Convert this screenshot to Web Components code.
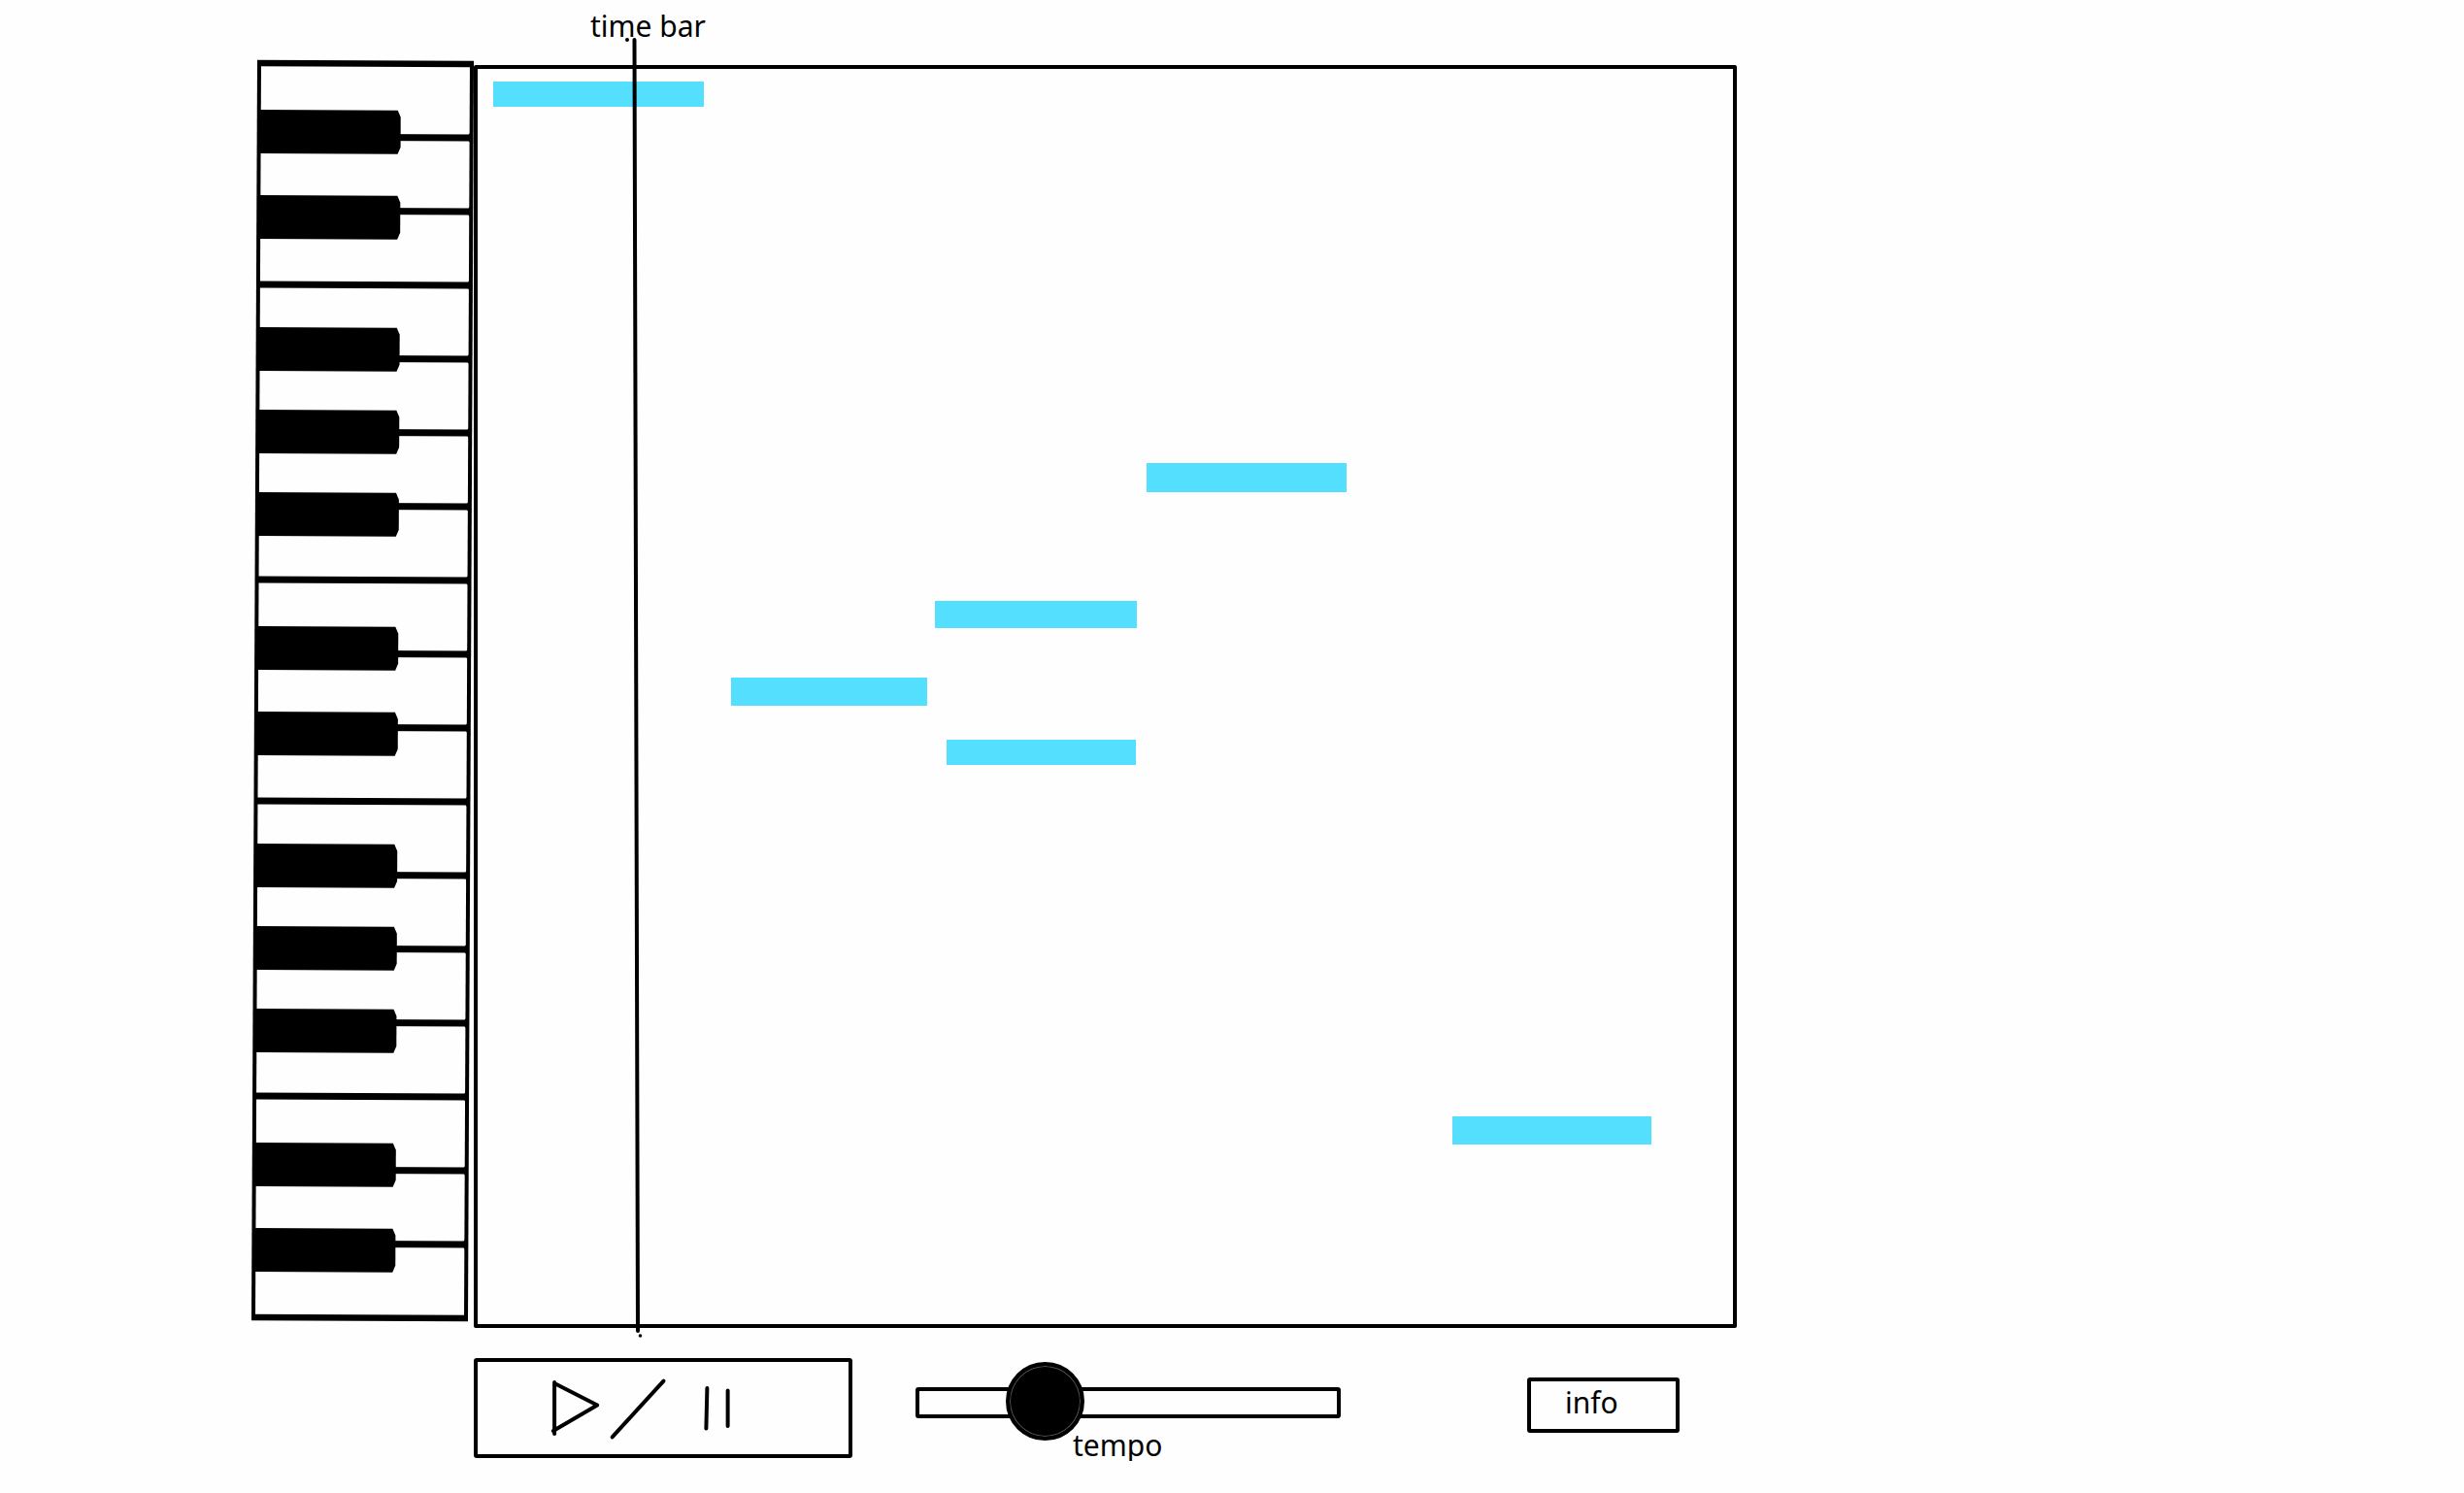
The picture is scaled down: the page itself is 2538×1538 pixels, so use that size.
<!DOCTYPE html>
<html lang="en">
<head>
<meta charset="utf-8">
<meta name="viewport" content="width=device-width, initial-scale=1">
<title>Piano roll</title>
<style>
  body { margin: 0; background: #fefefe; color: #000; font: 30px/32px "Noto Sans", "Open Sans", sans-serif; }
</style>
</head>
<body>
<piano-app></piano-app>

<script>
const define = (name, html, setup) => {
  const template = document.createElement("template");
  template.innerHTML = html;
  customElements.define(name, class extends HTMLElement {
    constructor() {
      super();
      this.attachShadow({ mode: "open" }).append(template.content.cloneNode(true));
    }
    connectedCallback() { if (setup) setup(this); }
  });
};

/* Vertical keyboard: 17 white keys, black keys grouped two and three per octave */
const whiteLines = Array.from({ length: 16 }, (_, i) =>
  `<path d="M2 ${3 + 76 * (i + 1)}H221" stroke-width="7"/>
   <path d="M221 ${3 + 76 * (i + 1) - 7}l-3 4v6l3 4z" stroke="none"/>`).join("");
const blackKeys = [51, 139, 275, 360, 445, 583, 671, 807, 892, 977, 1115, 1203].map(y =>
  `<path d="M1 ${y}H145l3 7v31l-3 7H1z" stroke="none"/>`).join("");

define("piano-keyboard", `
  <style>
    :host { display: block; }
    svg { display: block; width: 100%; height: 0; min-height: 100%; overflow: visible; }
  </style>
  <svg viewBox="258 67 230 1301" preserveAspectRatio="none" role="img" aria-label="Piano keyboard">
    <g transform="translate(265 62) rotate(0.265)" fill="#000" stroke="#000">
      <path d="M0 3H223" stroke-width="6.5"/>
      <path d="M0 1295H223" stroke-width="6.5"/>
      <path d="M2 0V1298" fill="none" stroke-width="4"/>
      <path d="M221 0V1298" fill="none" stroke-width="4"/>
      ${whiteLines}
      ${blackKeys}
    </g>
  </svg>`);

define("roll-note", `
  <style>
    :host { position: absolute; background: #55dfff; }
  </style>`, host => {
  const [start, pitch, length, size] = host.getAttribute("at").split(" ").map(n => n / 1293 * 100 + "%");
  Object.assign(host.style, { left: start, top: pitch, width: length, height: size });
});

define("time-bar", `
  <style>
    :host { position: absolute; inset: 0; pointer-events: none; }
    svg { display: block; width: 100%; height: 100%; overflow: visible; }
  </style>
  <svg viewBox="492 71 1293 1293" aria-hidden="true">
    <path d="M653.5 41L657 1371" fill="none" stroke="#000" stroke-width="4" stroke-linecap="round"/>
    <circle cx="646" cy="41" r="2"/>
    <circle cx="659.5" cy="1376" r="1.8"/>
  </svg>`);

define("note-roll", `
  <style>
    :host { display: block; position: relative; box-sizing: border-box; aspect-ratio: 1; border: 4px solid #000; border-radius: 2px; }
  </style>
  <slot></slot>`);

define("play-button", `
  <style>
    :host { display: block; }
    button { display: block; box-sizing: border-box; width: 100%; padding: 0; border: 4px solid #000; border-radius: 3px; background: none; cursor: pointer; }
    svg { display: block; width: 100%; height: 95px; }
  </style>
  <button type="button" aria-label="Play or pause">
    <svg viewBox="491 1403 383 95" fill="none" stroke="#000" stroke-width="4" stroke-linecap="round" stroke-linejoin="round" aria-hidden="true">
      <path d="M570.3 1424V1477M570.3 1425L614.5 1447.5L569 1474"/>
      <path d="M630 1480.5L683 1422.5"/>
      <path d="M728 1430L727 1471.5M749.3 1432.5V1469"/>
    </svg>
  </button>`);

define("tempo-slider", `
  <style>
    :host { display: flex; flex-direction: column; gap: 12px; padding-top: 30px; }
    input { -webkit-appearance: none; appearance: none; display: block; box-sizing: border-box; width: 100%; height: 32px; margin: 0; background: none; cursor: pointer; }
    input::-webkit-slider-runnable-track { box-sizing: border-box; height: 32px; border: 4px solid #000; border-radius: 3px; }
    input::-webkit-slider-thumb { -webkit-appearance: none; position: relative; box-sizing: border-box; width: 81px; height: 81px; margin-top: -30px; border: 4px solid #000; border-radius: 50%; background: #000; box-shadow: inset 0 0 0 1px #555; }
    label { padding-left: 162px; }
  </style>
  <input id="tempo" type="range" min="0" max="200" value="51">
  <label for="tempo"><slot></slot></label>`);

define("info-button", `
  <style>
    :host { display: block; padding-top: 20px; }
    button { display: block; box-sizing: border-box; width: 100%; padding: 6px 0 11px 35px; border: 4px solid #000; border-radius: 3px; background: none; color: inherit; font: inherit; text-align: left; cursor: pointer; }
  </style>
  <button type="button"><slot></slot></button>`);

define("piano-app", `
  <style>
    :host { display: block; }
    main { display: grid; grid-template-columns: 258fr 230px 1301fr 749fr; }
    .caption { grid-column: 3; padding: 11px 0 24px 120px; }
    piano-keyboard { grid-column: 2; }
    note-roll { grid-column: 3; }
    .controls { grid-column: 3; display: grid; grid-template-columns: 390fr 65fr 438fr 192fr 157fr 59fr; padding-top: 31px; align-items: start; }
    tempo-slider { grid-column: 3; }
    info-button { grid-column: 5; }
  </style>
  <main>
    <div class="caption">time bar</div>
    <piano-keyboard></piano-keyboard>
    <note-roll>
      <roll-note at="16 13 217 26"></roll-note>
      <roll-note at="261 627 202 29"></roll-note>
      <roll-note at="471 548 208 28"></roll-note>
      <roll-note at="483 691 195 26"></roll-note>
      <roll-note at="689 406 206 30"></roll-note>
      <roll-note at="1004 1079 205 29"></roll-note>
      <time-bar></time-bar>
    </note-roll>
    <div class="controls">
      <play-button></play-button>
      <tempo-slider>tempo</tempo-slider>
      <info-button>info</info-button>
    </div>
  </main>`);
</script>
</body>
</html>
